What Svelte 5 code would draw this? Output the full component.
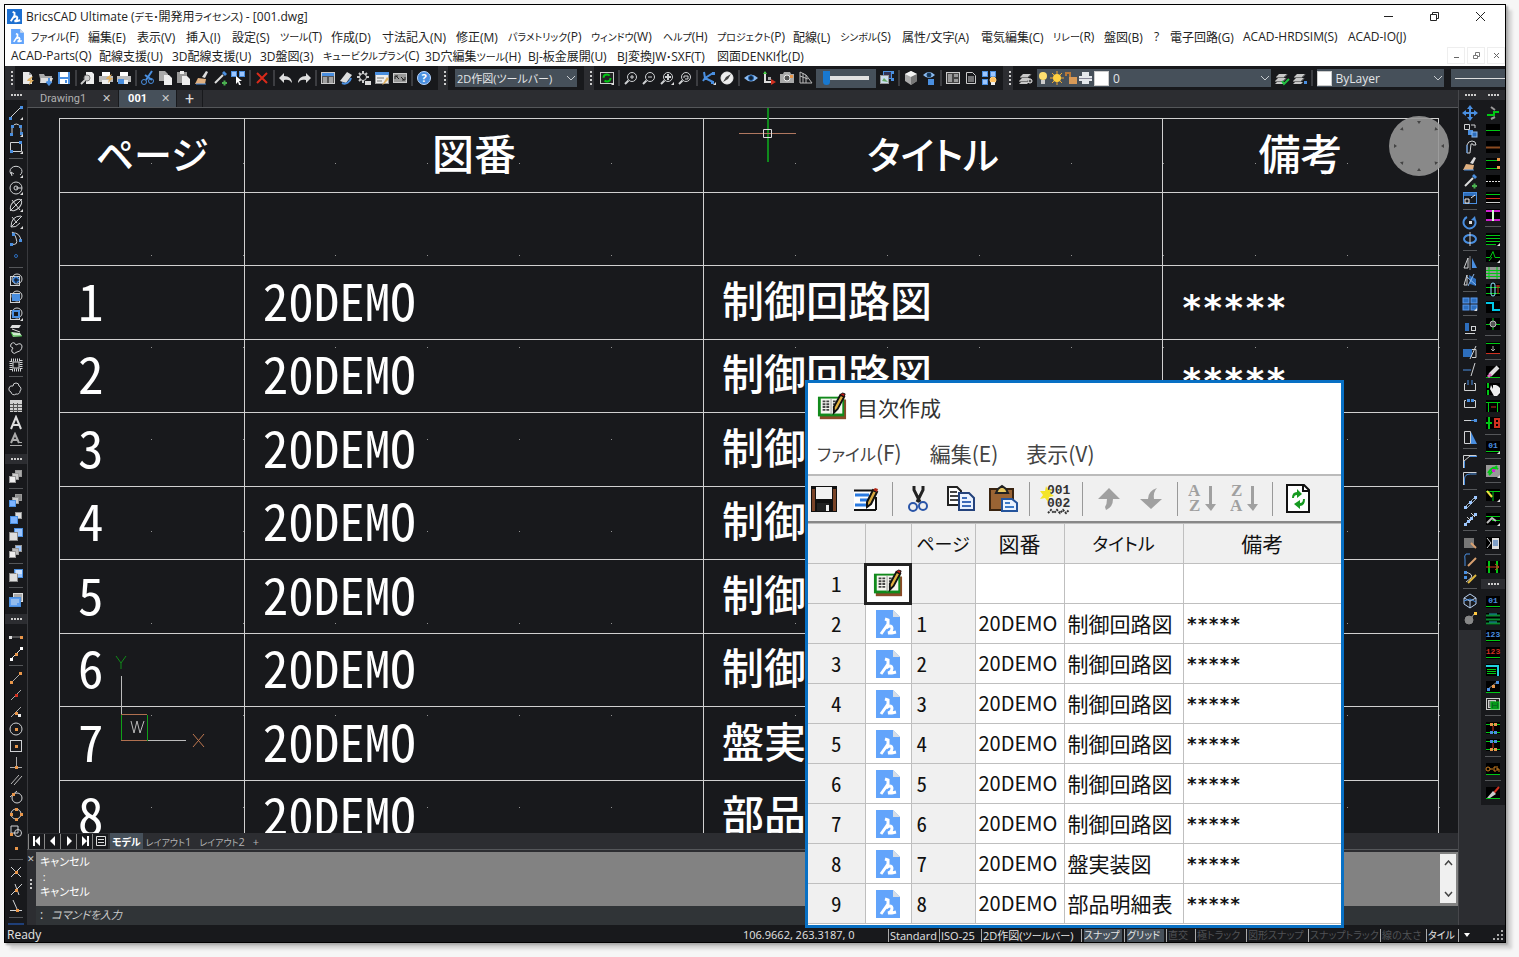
<script>
    const gray = '#d0d2d4';
    const blue = '#4a8fe0';
    const orange = '#e8964a';
    const green = '#00c814';
    const red = '#d03020';

    const line = (d, color = gray, width = 1) =>
        `<path d="${d}" fill="none" stroke="${color}" stroke-width="${width}"/>`;
    const fill = (d, color = gray) => `<path d="${d}" fill="${color}"/>`;
    const dot = (x, y, color = blue) => `<rect x="${x - 1}" y="${y - 1}" width="3" height="3" fill="${color}"/>`;
    const ring = (x, y, r, color = gray, inner = 'none') =>
        `<circle cx="${x}" cy="${y}" r="${r}" fill="${inner}" stroke="${color}"/>`;
    const box = (x, y, w, h, inner = 'none', color = 'none') =>
        `<rect x="${x}" y="${y}" width="${w}" height="${h}" fill="${inner}" stroke="${color}"/>`;
    const word = (text, color, y = 9) =>
        `<text x="8" y="${y}" fill="${color}" font-size="8" font-weight="bold" font-family="Liberation Mono" text-anchor="middle">${text}</text>`;
    const corner = fill('M12 15h3v-3z', '#ddd');
    const tile = box(1, 2, 14, 12, '#000');
    const page = fill('M3 2h6l3 3v9H3z', '#e8e8e8') + fill('M9 2v3h3z', '#999');
    const lens = ring(9, 7, 4.5) + line('M5.5 10.5L2 14', gray, 2);
    const stack = fill('M5 4h8l-3 3H2zM4 8h8l-3 3H1zM3 12h8l-2 2H1z', '#c8c8c8') + line('M2 7.5h8l3-3M1 11.5h8l3-3', '#777');
    const brush = fill('M12 1l2 1-3 6-3-1z', '#ddd') + fill('M4 8l8 1-1 5H1z', '#e0b080') + line('M2 14h10', blue);
    const dropper = fill('M10 3l2-2 3 3-2 2z', blue) + line('M11 5L3 13', '#ddd', 2) + line('M10 13h5M12.5 10.5v5', '#4ab050', 2);
    const printer = fill('M4 2h8v4H4z', '#fff') + fill('M1 6h14v6H1z', '#bbb') + fill('M4 10h8v4H4z', '#eee');
    const sheets = (a, b, c) => box(7.5, 1.5, 6, 6, a, '#999') + box(4.5, 4.5, 6, 6, b, '#999') + box(1.5, 7.5, 6, 6, c, '#999');
    const light = '#9cc6ff';
    const pair = box(6.5, 1.5, 8, 8, light, blue) + box(1.5, 5.5, 8, 8, '#ddd', '#888');
    const four = [[1, 2], [9, 2], [1, 9], [9, 9]].map(([x, y]) => box(x, y, 6, 5, '#2d6ebd', '#5a9af0')).join('');

    const icons = {
        New: page + fill('M8 9l5-3-2 4h3l-5 5 1-4H7z', '#e0b060'),
        Open: fill('M1 4h5l1 2h7v7H3z', '#aaa') + fill('M3 8h12l-2 5H2z', '#ddd') + line('M11 8v6M8.5 11.5l2.5 3 2.5-3', blue, 2),
        Save: fill('M2 2h12v12H2z', blue) + fill('M4 2h8v5H4zM4 9h8v5H4z', '#fff') + fill('M9 10h2v3H9z', blue),
        Preview: fill('M6 2h6l2 2v10H6z', '#eee') + ring(7, 8, 3, '#777', '#ccc') + line('M5 10l-4 4', '#ccc', 2),
        Publish: printer + fill('M9 7l5-3-2 4h3l-5 5 1-4H8z', '#e0b060'),
        PrintAs: printer + fill('M2 9h6v5H2z', blue),
        Cut: line('M12 1L6 10M5 5l7 5', blue, 2) + ring(4, 12, 2.5, blue) + ring(11, 11, 2.5, blue),
        Copy: fill('M1 1h6l3 3v7H1z', '#aaa') + fill('M6 5h5l3 3v7H6z', '#eee'),
        Paste: fill('M1 2h10v11H1z', '#999') + fill('M4 1h4v3H4z', '#eee') + fill('M6 6h5l3 3v6H6z', '#eee'),
        Match: brush,
        Picker: dropper,
        Select: box(1.5, 1.5, 5, 5, light, blue) + box(9.5, 1.5, 5, 5, light, blue) + fill('M6 6l6 5-3 0 2 4-2 0-1-3-2 2z', '#fff'),
        Delete: line('M3 3l10 10M13 3L3 13', '#d82a1a', 2),
        Undo: fill('M6 3v3c5 0 8 3 8 7-2-3-4-4-8-3v3L1 8z', '#ddd'),
        Redo: fill('M10 3v3c-5 0-8 3-8 7 2-3 4-4 8-3v3l5-5z', '#ddd'),
        Properties: box(1.5, 2.5, 13, 11, '#555', '#ccc') + fill('M2 3h12v3H2z', blue) + line('M3 8h4M3 10h4M3 12h4M9 8h4M9 10h4M9 12h4', '#eee'),
        Clean: fill('M9 2l5 3-6 8-6-2z', '#ddd') + line('M4 13c4 2 8-1 9-5', blue, 2),
        Settings: ring(7, 7, 3.5, '#ccc') + line('M7 1v3M7 10v3M1 7h3M10 7h3M3 3l2 2M11 3L9 5M3 11l2-2', '#ccc', 2) + fill('M9 11h6v4H9z', '#ddd'),
        Explorer: box(1.5, 2.5, 13, 11, '#eee', '#999') + fill('M1 2h14v3H1z', blue) + line('M3 8h7M3 11h5', '#777') + fill('M13 7l2 2-5 5-2 1z', '#e0b060'),
        Command: box(1.5, 3.5, 13, 9, '#999', '#ccc') + line('M3 9V6h3M4 6l3 3M13 7v3h-3M12 10L9 7', '#222'),
        Help: ring(8, 8, 6.5, '#bcd8ff', blue) + '<text x="8" y="12" fill="#fff" font-size="11" font-weight="bold" font-family="Open Sans" text-anchor="middle">?</text>',
        Regen: box(1.5, 2.5, 13, 11, '#222', '#ccc') + `<circle cx="8" cy="8" r="3.5" fill="none" stroke="${green}" stroke-width="2" stroke-dasharray="8 3"/>` + corner,
        ZoomIn: lens + line('M9 5v4M7 7h4'),
        ZoomOut: lens + line('M7 7h4'),
        ZoomAll: lens + line('M9 4v6M6 7h6', gray, 2) + corner,
        ZoomPrev: lens + line('M7 8V6h4v3H8'),
        Orbit: line('M3 2l1 6 8-5M4 8l8 4M4 8l-2 3', blue, 2) + dot(4, 8) + dot(12, 3) + dot(11, 12) + corner,
        Compass: ring(8, 8, 6, '#eee', '#eee') + fill('M12 4L9 9l-5 3 3-5z', '#444'),
        Look: fill('M1 8q7-7 14 0-7 7-14 0z', '#8abaf0') + ring(8, 8, 2.5, '#1d5fae', '#123'),
        Ucs: line('M4 2v10h9', '#ddd', 2) + fill('M2 4l2-3 2 3z', '#4c4') + fill('M10 9l5 3-5 3z', red) + box(7, 7, 3, 3, '#aaa'),
        Camera: fill('M1 4h3l1-2h6l1 2h3v9H1z', '#aaa') + ring(8, 8, 3, '#eee', '#555') + dot(12, 6, orange),
        Perspective: line('M3 2v11h12L9 5 3 2M3 6l8 3M6 3v10M9 5v8', '#bbb'),
        Render: box(4.5, 1.5, 8, 7, '#335', blue) + box(1.5, 5.5, 8, 8, '#cde', '#999') + fill('M3 11l2-3 4 4z', '#6a6') + dot(13, 2) + dot(13, 9),
        Solid: fill('M8 1l6 3v7l-6 4-6-4V4z', '#aaa') + fill('M8 1l6 3-6 3-6-3z', '#f4f4f4') + fill('M8 7l6-3v7l-6 4z', '#777'),
        Visual: fill('M2 5q6-6 12 0-6 6-12 0z', '#8abaf0') + ring(8, 5, 2, '#135', '#135') + box(7, 9, 6, 6, blue),
        Sheets: box(1.5, 2.5, 13, 11, '#444', '#ccc') + fill('M3 4h4v8H3zM9 4h4v3H9zM9 9h4v3H9z', '#999'),
        Report: line('M3.5 2.5h6l3 3v8h-9z', '#ccc') + line('M5 7h6M5 9h6M5 11h6', '#ccc'),
        Blocks: box(1.5, 1.5, 5, 5, light, blue) + box(9.5, 1.5, 5, 5, light, blue) + box(1.5, 9.5, 5, 5, light, blue) + ring(12, 10, 3, '#ffd080', '#ffc060') + fill('M10 12h4v3h-4z', '#eee'),
        Layers: stack + ring(12, 11, 2, '#eee', '#555'),
        LayerSet: stack + line('M8 11l2 3 5-5', '#20c040', 2),
        LayerPrev: stack + dot(13, 12),

        Line: line('M2 13L13 2') + dot(2, 13) + dot(13, 2) + corner,
        Polyline: line('M4 13V5q4-6 9 0v6') + dot(3, 12) + dot(4, 4) + dot(12, 4) + dot(13, 11) + corner,
        Rectangle: line('M2.5 3.5h11v9h-11z') + dot(12, 3) + dot(3, 12) + corner,
        Arc: line('M4 12a6 5 0 1 1 8 0M4 13l-1-4 3 2') + corner,
        Circle: ring(8, 8, 6) + line('M8 8h6') + ring(8, 8, 2) + corner,
        Ellipse: '<ellipse cx="8" cy="8" rx="7" ry="4" transform="rotate(-45 8 8)" fill="none" stroke="#d0d2d4"/>' + line('M2 14L14 2M4 3l8 10') + corner,
        EllipseArc: line('M13 2Q3 2 3 13 8 14 12 9M3 13L14 2M4 3l5 6') + corner,
        Spline: line('M3 13q8 2 5-6T4 2q8-1 9 8') + dot(3, 13) + dot(5, 3) + dot(12, 9),
        Point: ring(8, 8, 1.5, '#2d6ebd'),
        Hatch: box(2.5, 4.5, 9, 9, 'none', gray) + ring(9, 7, 5) + ring(8, 8, 3, blue, '#2765b5') + line('M6 8h5M8 6v5', '#111'),
        Gradient: box(2.5, 4.5, 9, 9, 'none', gray) + ring(9, 7, 5) + fill('M4 5h8v7H4z', blue),
        Boundary: box(2.5, 4.5, 9, 9, 'none', gray) + ring(9, 7, 5) + line('M5 5h6v6H5z', blue, 2) + corner,
        Region: fill('M4 2h9l-2 3H2z', '#ddd') + line('M4 6l8 3', '#ddd') + fill('M3 9l9 1 2 3-9 1z', '#cfeccf') + line('M3 9l2 4h9', '#3a3'),
        Wipeout: line('M5 8Q1 7 3 4 6 1 8 5q5-3 6 1 0 5-5 6-3 3-5 0-1-2 1-4z'),
        Frame: '<rect x="3" y="3" width="10" height="10" fill="none" stroke="#d0d2d4" stroke-width="3" stroke-dasharray="1 1"/>' + line('M5 5h6v6H5z'),
        Cloud: line('M5 5a3 3 0 0 1 6 0 3 3 0 0 1 1 5 3 3 0 0 1-4 3 3 3 0 0 1-5-2 3 3 0 0 1 2-6z'),
        Table: box(2, 2, 12, 12, '#d0d0d0') + line('M2 6.5h12M2 9.5h12M2 12.5h12M5.5 5v9M9.5 5v9', '#555'),
        Text: line('M3 14L8 2l5 12M5 10h6', '#ddd', 2),
        Mtext: line('M3 11L7 2l4 9M4 8h6', '#aaa', 2) + line('M2 13.5h12M11 10.5h3', '#aaa'),

        DrawOrder: sheets('#aaa', '#ccc', '#eee'),
        Front: sheets('#888', '#ccc', light) + box(1.5, 7.5, 6, 6, '#7db4ff', blue),
        Above: box(7.5, 2.5, 6, 6, '#ddd', '#999') + box(2.5, 6.5, 7, 7, '#7db4ff', blue),
        Back: pair,
        Under: sheets(light, '#bbb', '#eee'),
        TextFront: pair + line('M8 3h6M8 5h6', '#fff'),
        Annotation: box(5.5, 1.5, 9, 8, '#aaa', '#ddd') + box(1.5, 5.5, 11, 9, '#5c9df0', blue) + line('M3 8h8M3 10h8M3 12h6', '#cde'),

        Temp: line('M3 8h10', '#888') + dot(2, 8, '#ddd') + dot(13, 8, orange),
        From: line('M2 14L14 2', '#ddd') + dot(3, 13, '#fff') + dot(13, 2, '#fff') + dot(8, 8, orange),
        Endpoint: line('M3 13L13 3', '#aaa') + dot(3, 12, orange) + dot(12, 3, orange),
        Midpoint: line('M3 13L13 3', '#aaa') + dot(8, 8, red),
        Nearest: line('M3 13L13 3', '#aaa') + dot(8, 9, orange) + dot(11, 11, '#eee'),
        Center: ring(8, 8, 6) + dot(8, 8, orange),
        GeoCenter: box(2.5, 2.5, 11, 11, 'none', gray) + dot(8, 8, orange),
        Perpendicular: line('M8.5 2v10M2 12.5h12', '#aaa') + dot(8, 12, orange),
        Parallel: line('M3 12l8-9M6 13l8-9', '#bbb'),
        Tangent: ring(9, 9, 5) + line('M2 8l7-6') + dot(5, 5, orange),
        Quadrant: ring(8, 8, 5) + dot(8, 3, orange) + dot(8, 13, orange) + dot(3, 8, orange) + dot(13, 8, orange),
        Insertion: line('M3 3h7v7H3z') + ring(10, 10, 3.5) + dot(3, 11, orange),
        Node: dot(8, 8, orange),
        Intersection: line('M3 3l10 10M13 3L3 13') + dot(8, 8, orange),
        Apparent: line('M3 14L14 3M7 3l4 11') + dot(8, 9, orange),
        Extension: line('M2 12.5h12M5 2l4 9') + dot(9, 12, orange),
        Snap: box(0, 1, 16, 15, '#1f3f78') + line('M2 5.5h12', blue),

        Move: line('M8 2v12M2 8h12', blue, 2) + fill('M8 0l3 4H5zM8 16l3-4H5zM0 8l4-3v6zM16 8l-4-3v6z', blue),
        CopyObj: line('M2.5 2.5h5v5h-5zM9 3h4v3') + box(6, 8, 5, 5, blue) + box(10, 10, 5, 5, '#2d6ebd', '#8abaf0'),
        Offset: line('M5 14V6q1-4 5-4t4 4H11q0-2-2-1L8 14z') + line('M5 14V6', blue),
        Brush: brush,
        Dropper: dropper,
        Stretch: box(1.5, 2.5, 13, 11, 'none', blue) + box(2, 3, 12, 3, '#2d6ebd') + line('M3 9h4v4H3zM9 8l4-3', '#eee'),
        Rotate: line('M5 3a6 6 0 1 0 8 3', blue, 2) + dot(8, 8, '#ddd') + fill('M13 2l1 5-5-1z', blue),
        Rotate3d: '<ellipse cx="8" cy="8" rx="6" ry="4" fill="none" stroke="#4a8fe0" stroke-width="2"/>' + line('M8 1v14'),
        Mirror: line('M6 3v10H2z') + line('M8 1v14', '#888') + fill('M10 3v10h5z', blue),
        Mirror3d: line('M5 3v10H2z') + fill('M7 3l7 4v7l-6-2z', '#2d6ebd') + line('M5 5l9 8M12 2l-6 12', '#8abaf0'),
        Array: four + corner,
        Align: box(3, 3, 4, 8, '#2d6ebd') + box(9.5, 6.5, 4, 4, 'none', gray) + line('M3 13.5h10'),
        Trim: box(1, 5, 9, 8, '#2d6ebd') + line('M10 5.5h4v8h-4M14 2L8 15'),
        Extend: line('M1 9h8', blue) + line('M13 2L9 15'),
        Break: line('M4 5.5H2.5v7h11v-7H12') + line('M6 2v5M10 2v5', blue),
        Join: line('M4 5.5H2.5v7h11v-7H12') + dot(6, 5) + dot(10, 5),
        Lengthen: line('M2 8.5h7') + line('M9 8.5h4', blue) + dot(13, 8),
        Scale: line('M2.5 2.5h6v12h-6z') + fill('M9 3l6 12H9z', blue),
        Chamfer: line('M1.5 15V2.5h13M2 8l6-5') + line('M2.5 8v7M8 3.5h7', blue),
        Fillet: line('M1.5 15V2.5h13') + line('M2.5 15V9q0-5 6-5h6', blue),
        Divide: line('M3 13L13 3M5 14l9-9', '#9ab') + dot(3, 13, light) + dot(13, 3, light) + dot(8, 8, light),
        Measure: line('M3 13L13 3', '#9ab') + dot(3, 13, light) + dot(6, 10, light) + dot(9, 7, light) + dot(13, 3, light) + line('M5 6l4 4M9 2l4 4'),
        EditHatch: box(2, 3, 10, 10, '#777') + line('M9 8l5 5', '#d8a070', 2),
        EditPline: line('M8 2H4Q2 3 3 8v6', blue) + line('M6 14l8-8', '#d8a070', 2),
        EditSpline: line('M3 3q9 2 6 6l-5 4') + dot(3, 3) + dot(3, 8) + line('M6 14l8-8', '#e0b840', 2),
        Cube: line('M8 1l6 4v6l-6 4-6-4V5zM8 8l6-3M8 8L2 5M8 8v7', '#b8d0f0') + line('M2 8l6-2 6 3', blue),
        Explode: ring(7, 10, 4, '#888', '#888') + line('M10 7l2-3', '#999') + dot(13, 3, '#ffc840'),

        Wire: line('M2 10h7V7h5', green, 2) + line('M6 2l4 3M6 14l4-2', '#999', 2),
        WireGreen: tile + line('M1 8.5h14', green),
        WireBrown: tile + line('M1 8.5h14', '#8a4a20', 2),
        WirePair: tile + line('M1 4.5h12M1 12.5h12', green) + dot(13, 3, orange) + dot(13, 11, orange),
        WireDash: tile + '<path d="M1 8.5h14" stroke="#ddd" stroke-dasharray="2 1"/>',
        WireThree: tile + line('M1 4.5h14', green) + line('M1 8.5h14', red) + line('M1 12.5h14', '#ccc'),
        WireLink: tile + line('M1 4h14M1 13h14', '#d020d0', 2) + line('M8 3v11', '#ccffcc', 2),
        Bus: tile + line('M1 4.5h14M1 7.5h14M1 10.5h14M1 13.5h10', green) + corner,
        Jump: tile + line('M1 9.5h4l3-6 2 6h5M7 9l-3 4', green) + corner,
        Grid: box(1, 2, 14, 12, '#999') + line('M1 5.5h14M1 8.5h14M1 11.5h14M4 2v12M12 2v12', green),
        Cable: tile + line('M1 5.5h14M1 11.5h14', green) + '<rect x="6" y="1" width="4" height="13" rx="2" fill="none" stroke="#8fe8ff"/>' + line('M13 12V3M11 4h4', red),
        Step: tile + line('M1 4h7v7h7', '#00c8e8', 2),
        Junction: tile + line('M1 8.5h14M8 2v12', green) + ring(8, 8, 3, '#bbb', '#555'),
        Between: tile + line('M1 3.5h14', green) + line('M1 13.5h14', red) + line('M8 6v5M6 9l2 2 2-2', '#aaa'),
        Erase: tile + line('M1 13.5h14', green) + line('M13 3L5 11', '#ddd', 4) + line('M6 10l-3 3', '#e070c0', 3),
        Grab: tile + line('M3 2v5M3 9v5', green, 2) + fill('M6 4l2 4 0-4 2 0 1 0 2 1 2 2v5l-3 3H9L5 8z', '#eee'),
        Gate: tile + line('M3.5 14V4.5h9V14M1 4.5h14', green) + line('M6 9h5', red),
        Contact: tile + line('M4 2v12M1 8h6', green, 2) + line('M10 4h4v8h-4zM9 8h5', red, 2),
        Number: tile + word('01', blue) + line('M1 12.5h14', green) + corner,
        Symbol: box(1, 2, 14, 12, '#999') + line('M3 10q5-8 10-4M4 12l8-9', green, 2) + dot(8, 7, '#d020d0') + corner,
        Mark: tile + line('M1 4.5h14M8 4v10', green) + line('M2 4l5 6', '#f0e040', 2) + corner,
        Route: tile + line('M1 5.5h14M7 9.5h8', green) + line('M2 12l5-5 4 3', '#bbb', 2) + corner,
        Listing: tile + line('M2 3l4 5-4 5') + box(7, 3, 7, 11, '#ddd') + line('M8 6h5M8 8h5M8 10h5', '#2060b0'),
        Insert: tile + line('M4 2v12M12 2v12', green, 2) + line('M1 8h12M10 5l4 3-4 3', red),

        NumberBlue: tile + word('01', blue) + line('M1 12.5h14', green),
        Rows: tile + line('M1 4.5h14M1 8.5h14M1 12.5h14', '#0a8a30', 2) + line('M4 3h8M4 11h8', '#20b0b8'),
        CountBlue: tile + word('123', blue) + line('M1 12.5h14', green),
        CountRed: tile + word('123', red) + line('M1 12.5h14', green),
        Frames: tile + line('M1 4h12v10', '#20d0e0', 2) + line('M2 7.5h9M2 9.5h9M2 11.5h9', green),
        Jumpers: tile + line('M1 13.5h14', green) + line('M3 10l9-7', '#888') + dot(3, 10) + dot(8, 7, orange) + dot(12, 3),
        Panels: box(1.5, 2.5, 13, 11, '#222', '#ccc') + box(3.5, 4.5, 7, 7, '#777', '#ccc') + box(6, 6, 8, 7, '#0a6a20', green) + line('M8 8h4M8 11h4', green),
        SwapUp: tile + line('M1 4.5h14M1 12.5h14', green) + dot(6, 4, orange) + dot(10, 4, orange) + line('M8 6v5', red) + dot(6, 12) + dot(10, 12),
        SwapDown: tile + line('M1 4.5h14M1 12.5h14', green) + dot(6, 4) + dot(10, 4) + line('M8 6v5', red) + dot(6, 12, orange) + dot(10, 12, orange),
        Channel: tile + ring(3, 8, 2, '#d08020') + line('M5 8h3M11 6H9v4h2M12 5v5M12 8h2v3', '#d08020') + line('M1 13.5h14', green),
        Sweep: tile + line('M1 13.5h14', green) + line('M14 2L8 9', red, 2) + fill('M8 6l3 3-6 4H2z', '#ccc'),
    };

    const fileBar = [
        ['New', 'Open', 'Save'],
        ['Preview', 'Publish', 'PrintAs'],
        ['Cut', 'Copy', 'Paste', 'Match', 'Picker', 'Select'],
        ['Delete'],
        ['Undo', 'Redo'],
        ['Properties', 'Clean', 'Settings', 'Explorer', 'Command'],
        ['Help'],
    ];
    const zoomBar = [
        ['Regen'],
        ['ZoomIn', 'ZoomOut', 'ZoomAll', 'ZoomPrev'],
        ['Orbit', 'Compass'],
        ['Look', 'Ucs', 'Camera', 'Perspective'],
    ];
    const viewBar = [['Render'], ['Solid', 'Visual'], ['Sheets', 'Report', 'Blocks']];

    const leftBars = [
        [
            ['Line', 'Polyline', 'Rectangle'],
            ['Arc', 'Circle', 'Ellipse', 'EllipseArc', 'Spline', 'Point'],
            ['Hatch', 'Gradient', 'Boundary', 'Region', 'Wipeout', 'Frame'],
            ['Cloud', 'Table', 'Text', 'Mtext'],
        ],
        [['DrawOrder'], ['Front', 'Above', 'Back', 'Under'], ['TextFront'], ['Annotation']],
        [
            ['Temp', 'From'],
            ['Endpoint', 'Midpoint', 'Nearest', 'Center', 'GeoCenter', 'Perpendicular', 'Parallel', 'Tangent', 'Quadrant', 'Insertion', 'Node'],
            ['Intersection', 'Apparent', 'Extension'],
            ['Snap'],
        ],
    ];
    const modifyBars = [
        [
            ['Move', 'CopyObj', 'Offset', 'Brush', 'Dropper', 'Stretch'],
            ['Rotate', 'Rotate3d'],
            ['Mirror', 'Mirror3d'],
            ['Array'],
            ['Align'],
            ['Trim', 'Extend', 'Break', 'Join', 'Lengthen', 'Scale'],
            ['Chamfer', 'Fillet'],
            ['Divide', 'Measure'],
            ['EditHatch', 'EditPline', 'EditSpline'],
            ['Cube', 'Explode'],
        ],
    ];
    const wireBars = [
        [
            ['Wire', 'WireGreen', 'WireBrown', 'WirePair', 'WireDash', 'WireThree', 'WireLink'],
            ['Bus', 'Jump', 'Grid', 'Cable', 'Step', 'Junction'],
            ['Between'],
            ['Erase', 'Grab', 'Gate', 'Contact'],
            ['Number'],
            ['Symbol'],
            ['Mark'],
            ['Route'],
            ['Listing'],
            ['Insert'],
        ],
        [
            ['NumberBlue', 'Rows', 'CountBlue', 'CountRed', 'Frames', 'Jumpers', 'Panels'],
            ['SwapUp', 'SwapDown'],
            ['Channel'],
            ['Sweep'],
        ],
    ];

    const menuTop = [
        ['ファイル(F)', 57], ['編集(E)', 49], ['表示(V)', 49], ['挿入(I)', 46], ['設定(S)', 48],
        ['ツール(T)', 51], ['作成(D)', 51], ['寸法記入(N)', 74], ['修正(M)', 52], ['パラメトリック(P)', 83],
        ['ウィンドウ(W)', 72], ['ヘルプ(H)', 54], ['プロジェクト(P)', 76], ['配線(L)', 47], ['シンボル(S)', 62],
        ['属性/文字(A)', 79], ['電気編集(C)', 72], ['リレー(R)', 51], ['盤図(B)', 50], ['?', 16],
        ['電子回路(G)', 73], ['ACAD-HRDSIM(S)', 105], ['ACAD-IO(J)', 60],
    ];
    const menuBottom = [
        ['ACAD-Parts(Q)', 88], ['配線支援(U)', 73], ['3D配線支援(U)', 88], ['3D盤図(3)', 63], ['キュービクルプラン(C)', 102],
        ['3D穴編集ツール(H)', 103], ['BJ-板金展開(U)', 89], ['BJ変換JW・SXF(T)', 100], ['図面DENKI化(D)', 90],
    ];

    const titles = ['制御回路図', '制御回路図', '制御回路図', '制御回路図', '制御回路図', '制御回路図', '盤実装図', '部品明細表'];
    const headings = ['ページ', '図番', 'タイトル', '備考'];

    const status = [
        ['Standard', 51, ''], ['ISO-25', 42, ''], ['2D作図(ツールバー)', 100, ''],
        ['スナップ', 43, 'on small'], ['グリッド', 42, 'on small'],
        ['直交', 29, 'off small'], ['極トラック', 51, 'off small'], ['図形スナップ', 62, 'off small'],
        ['スナップトラック', 72, 'off small'], ['線の太さ', 46, 'off small'], ['タイル', 32, 'small'],
    ];

    // katakana runs are set a little smaller than kanji and latin
    function runs(text) {
        return text.match(/[ァ-ヺー・]+|[^ァ-ヺー・]+/g).map((t) => ({ t, kana: /[ァ-ヺ・]/.test(t) }));
    }
</script>

{#snippet jp(text)}{#each runs(text) as r}<span class:kana={r.kana}>{r.t}</span>{/each}{/snippet}

{#snippet tool(name)}
    <button type="button" class="tool" aria-label={name}>
        <svg width="16" height="16" viewBox="0 0 16 16">{@html icons[name]}</svg>
    </button>
{/snippet}

{#snippet groups(list)}
    {#each list as group, i}
        {#if i > 0}<i class="sep"></i>{/if}
        {#each group as name}{@render tool(name)}{/each}
    {/each}
{/snippet}

{#snippet sidebar(bars)}
    {#each bars as bar}
        <div class="sideBar">
            <div class="grip">{#each [1, 2, 3, 4] as n}<i></i>{/each}</div>
            {@render groups(bar)}
        </div>
    {/each}
{/snippet}

{#snippet chevron()}
    <svg class="chevron" width="10" height="6" viewBox="0 0 10 6"><path d="M1 1l4 4 4-4" fill="none" stroke="#c8ccd0" /></svg>
{/snippet}

{#snippet handle()}
    <div class="handle"><i></i></div>
{/snippet}

{#snippet fileIcon(w, h)}
    <svg width={w} height={h} viewBox="0 0 24 28">
        <path d="M0 0h17l7 7v21H0z" fill="#62a4fb" />
        <path d="M17 0v7h7z" fill="#d6dde6" />
        <path d="M9 9l3 1v4L5 24" fill="none" stroke="#fff" stroke-width="3" />
        <path d="M10 18q5-4 6 0 0 4-4 5h4l4-1" fill="none" stroke="#fff" stroke-width="3" />
    </svg>
{/snippet}

{#snippet bookIcon()}
    <svg width="30" height="30" viewBox="0 0 32 32">
        <path d="M3 8h28v21H3z" fill="#8a4a28" />
        <path d="M1 5h28v21H1z" fill="#128a1c" />
        <path d="M4 7h23v16H4z" fill="#f6f6f0" />
        <path d="M15 7v17" stroke="#999" stroke-width="1" />
        <path d="M6 10h7M6 13h7M6 16h7M6 19h7M17 10h5M17 13h4M17 16h3M17 19h3" stroke="#444" stroke-width="2" stroke-dasharray="3 1" />
        <path d="M25 3l4 2-7 13-4 4v-6z" fill="#e0b040" stroke="#111" stroke-width="2" />
        <path d="M25 3l4 2 1-3-3-1z" fill="#c01810" stroke="#111" />
    </svg>
{/snippet}

<div class="desktop">
    <div class="window">
        <header>
            <div class="titlebar">
                <svg width="15" height="15" viewBox="0 0 16 16">
                    <path d="M0 0h16v16H0z" fill="#1c6fd0" />
                    <path d="M6 3l2 1v3l-4 6M7 9q3-2 4 0 0 3-3 4h2l4-1" fill="none" stroke="#fff" stroke-width="2" />
                </svg>
                <h1>{@render jp('BricsCAD Ultimate (デモ・開発用ライセンス) - [001.dwg]')}</h1>
                <div class="caption">
                    <button type="button" aria-label="Minimize"><svg width="11" height="11" viewBox="0 0 11 11"><path d="M1 5.5h9" stroke="#222" /></svg></button>
                    <button type="button" aria-label="Restore"><svg width="11" height="11" viewBox="0 0 11 11"><path d="M1.5 3.5h6v6h-6zM3.5 3V1.5h6v6H8" fill="none" stroke="#222" /></svg></button>
                    <button type="button" aria-label="Close"><svg width="11" height="11" viewBox="0 0 11 11"><path d="M1 1l9 9M10 1l-9 9" stroke="#222" /></svg></button>
                </div>
            </div>
            <nav class="menu first">
                {@render fileIcon(13, 15)}
                {#each menuTop as [label, width]}
                    <button type="button" style="width: {width}px">{@render jp(label)}</button>
                {/each}
            </nav>
            <nav class="menu">
                {#each menuBottom as [label, width]}
                    <button type="button" style="width: {width}px">{@render jp(label)}</button>
                {/each}
                <div class="mdi">
                    <button type="button" aria-label="Minimize drawing"><svg width="7" height="7" viewBox="0 0 7 7"><path d="M1 5.5h5" stroke="#666" /></svg></button>
                    <button type="button" aria-label="Restore drawing"><svg width="7" height="7" viewBox="0 0 7 7"><path d="M.5 3.5h4v3h-4zM2.5 3V.5h4v4H5" fill="none" stroke="#777" /></svg></button>
                    <button type="button" aria-label="Close drawing"><svg width="7" height="7" viewBox="0 0 7 7"><path d="M1 1l5 5M6 1L1 6" stroke="#666" /></svg></button>
                </div>
            </nav>
        </header>

        <div class="toolbars">
            {@render handle()}
            <div class="bar">{@render groups(fileBar)}</div>
            {@render handle()}
            <div class="bar">
                <label class="combo workspace">
                    <select aria-label="Workspace"><option>2D作図(ツールバー)</option></select>
                    {@render chevron()}
                </label>
            </div>
            {@render handle()}
            <div class="bar">
                {@render groups(zoomBar)}
                <input class="lensSlider" type="range" min="0" max="100" value="0" aria-label="Lens length" />
                {@render groups(viewBar)}
            </div>
            {@render handle()}
            <div class="bar layers">
                {@render tool('Layers')}
                <label class="combo layer">
                    <svg width="56" height="16" viewBox="0 0 56 16">
                        <circle cx="6" cy="6" r="4" fill="#ffe070" /><path d="M4 10h4v4H4z" fill="#ccc" />
                        <path d="M20 1v14M13 8h14M15 3l10 10M25 3L15 13" stroke="#f0a830" /><circle cx="20" cy="8" r="4" fill="#ffd040" />
                        <path d="M29 6V3h4v5" fill="none" stroke="#b87838" stroke-width="2" /><path d="M32 7h8v7h-8z" fill="#d89a58" />
                        <path d="M45 2h7v4h-7zM42 6h13v5H42zM45 10h7v4h-7z" fill="#e4e8ec" /><path d="M42 8.5h13" stroke="#889" />
                    </svg>
                    <i class="swatch"></i>
                    <select aria-label="Layer"><option>0</option></select>
                    {@render chevron()}
                </label>
                {@render tool('LayerSet')}
                {@render tool('LayerPrev')}
                <i class="sep"></i>
                <label class="combo color">
                    <i class="swatch"></i>
                    <select aria-label="Color"><option>ByLayer</option></select>
                    {@render chevron()}
                </label>
                <div class="linetype"><i></i></div>
            </div>
        </div>

        <main>
            <aside class="draw">{@render sidebar(leftBars)}</aside>

            <div class="work">
                <div class="tabs">
                    <button type="button" class="tab">Drawing1 <span>✕</span></button>
                    <button type="button" class="tab active">001 <span>✕</span></button>
                    <button type="button" class="tab add">+</button>
                </div>

                <div class="canvas">
                    <table class="cad">
                        <colgroup><col /><col class="wide" /><col class="wide" /><col class="note" /></colgroup>
                        <tbody>
                            <tr>{#each headings as h}<th>{@render jp(h)}</th>{/each}</tr>
                            <tr><td></td><td></td><td></td><td></td></tr>
                            {#each titles as title, i}
                                <tr>
                                    <td class="half">{i + 1}</td>
                                    <td class="half">20DEMO</td>
                                    <td>{title}</td>
                                    <td class="stars">*****</td>
                                </tr>
                            {/each}
                        </tbody>
                    </table>

                    <svg class="cursor" width="58" height="54" viewBox="0 0 58 54">
                        <path d="M28 0h2v54h-2z" fill="#0f8a1c" />
                        <path d="M0 25.5h57" stroke="#b07860" />
                        <path d="M24.5 21.5h8v8h-8z" fill="none" stroke="#ddd" />
                    </svg>
                    <svg class="compass" width="60" height="60" viewBox="0 0 60 60">
                        <circle cx="30" cy="30" r="30" fill="#969696" fill-opacity=".9" />
                        {#each [0, 45, 90, 135, 180, 225, 270, 315] as a}
                            <path d="M28 5h4l-2 3z" fill="#444" transform="rotate({a} 30 30)" />
                        {/each}
                    </svg>
                    <svg class="ucs" width="94" height="94" viewBox="0 0 94 94">
                        <path d="M7.5 22v64M7 86.5h65" stroke="#bbb" />
                        <path d="M2 2l5 7 5-7M7 9v6" fill="none" stroke="#108a18" />
                        <path d="M79 80l11 13M90 80L79 93" stroke="#c07850" />
                        <path d="M7 60.5h26M7 86.5h26" stroke="#b07050" />
                        <path d="M7.5 61v25M33.5 61v26" stroke="#10a018" />
                        <path d="M17 67l3 12 3-12 3 12 4-12" fill="none" stroke="#bbb" />
                    </svg>
                </div>

                <div class="layouts">
                    <button type="button" class="nav" aria-label="First layout"><svg width="10" height="10" viewBox="0 0 10 10"><path d="M1 0h2v10H1zM8 0v10L3 5z" fill="#fff" /></svg></button>
                    <button type="button" class="nav" aria-label="Previous layout"><svg width="10" height="10" viewBox="0 0 10 10"><path d="M7 0v10L2 5z" fill="#fff" /></svg></button>
                    <button type="button" class="nav" aria-label="Next layout"><svg width="10" height="10" viewBox="0 0 10 10"><path d="M3 0v10l5-5z" fill="#fff" /></svg></button>
                    <button type="button" class="nav" aria-label="Last layout"><svg width="10" height="10" viewBox="0 0 10 10"><path d="M2 0v10l5-5zM7 0h2v10H7z" fill="#fff" /></svg></button>
                    <button type="button" class="nav" aria-label="Layout list"><svg width="10" height="10" viewBox="0 0 10 10"><path d="M.5.5h9v9h-9zM2 3.5h6M2 6.5h6" fill="none" stroke="#ddd" /></svg></button>
                    <button type="button" class="layout active">モデル</button>
                    <button type="button" class="layout">レイアウト<span>1</span></button>
                    <button type="button" class="layout">レイアウト<span>2</span></button>
                    <button type="button" class="layout"><span>+</span></button>
                </div>

                <div class="command">
                    <div class="commandHandle"><button type="button" aria-label="Close command line">✕</button><i></i></div>
                    <div class="console">
                        <div class="history">
                            <div class="log">
                                <p>キャンセル</p>
                                <p>&nbsp;:</p>
                                <p>キャンセル</p>
                            </div>
                            <div class="scroll">
                                <button type="button" aria-label="Scroll up"><svg width="9" height="6" viewBox="0 0 9 6"><path d="M1 5l3.5-4L8 5" fill="none" stroke="#444" stroke-width="1.5" /></svg></button>
                                <button type="button" aria-label="Scroll down"><svg width="9" height="6" viewBox="0 0 9 6"><path d="M1 1l3.5 4L8 1" fill="none" stroke="#444" stroke-width="1.5" /></svg></button>
                            </div>
                        </div>
                        <label class="prompt">:<input type="text" placeholder="コマンドを入力" /></label>
                    </div>
                </div>
            </div>

            <aside class="modify">{@render sidebar(modifyBars)}</aside>
            <aside class="wires">{@render sidebar(wireBars)}</aside>
        </main>

        <footer>
            <span class="ready">Ready</span>
            <span class="coords">106.9662, 263.3187, 0</span>
            {#each status as [label, width, kind]}
                <button type="button" class="field {kind}" style="width: {width}px"><b>{@render jp(label)}</b></button>
            {/each}
            <button type="button" class="field more" aria-label="Status bar options"><svg width="8" height="5" viewBox="0 0 8 5"><path d="M1 0h6L4 4z" fill="#fff" /></svg></button>
            <svg class="size" width="10" height="10" viewBox="0 0 10 10"><path d="M8 0h2v2H8zM8 4h2v2H8zM8 8h2v2H8zM4 4h2v2H4zM4 8h2v2H4zM0 8h2v2H0z" fill="#aaa" /></svg>
        </footer>

        <section class="dialog">
            <div class="dialogTitle">
                {@render bookIcon()}
                <h2>目次作成</h2>
            </div>
            <nav class="dialogMenu">
                <button type="button">{@render jp('ファイル(F)')}</button>
                <button type="button">編集(E)</button>
                <button type="button">表示(V)</button>
            </nav>
            <div class="dialogTools">
                <button type="button" aria-label="Save list">
                    <svg width="32" height="32" viewBox="0 0 32 32"><path d="M3 3h26v26H3z" fill="#111" /><path d="M4 6h3v22H4zM25 6h3v22h-3z" fill="#7a4428" /><path d="M8 4h16v12H8z" fill="#f2f2f2" /><path d="M9 20h12v8H9z" fill="#222" /><path d="M18 22h3v6h-3z" fill="#eee" /></svg>
                </button>
                <button type="button" aria-label="Edit row">
                    <svg width="32" height="32" viewBox="0 0 32 32"><path d="M4 7h22v20H4z" fill="#fff" /><path d="M4 7.5h20M4 27h22M26 14v13" fill="none" stroke="#111" stroke-width="2" /><path d="M5 12h14M10 17h9M5 22h14" stroke="#2a7ae0" stroke-width="3" /><path d="M23 7l4 2-6 12-4 3v-5z" fill="#d8a840" stroke="#111" stroke-width="2" /><path d="M23 7l4 2 1-3-3-1z" fill="#b02818" /></svg>
                </button>
                <i></i>
                <button type="button" aria-label="Cut row">
                    <svg width="32" height="32" viewBox="0 0 32 32" fill="none"><path d="M11 3v4l6 12M20 3v4l-6 12" stroke="#222" stroke-width="3" /><circle cx="10" cy="24" r="4" stroke="#2a55a8" stroke-width="2" /><circle cx="20" cy="23" r="4" stroke="#2a55a8" stroke-width="2" /></svg>
                </button>
                <button type="button" aria-label="Copy row">
                    <svg width="32" height="32" viewBox="0 0 32 32"><path d="M3 4h9l4 4v14H3z" fill="#fff" stroke="#222" stroke-width="2" /><path d="M5 9h7M5 13h9M5 17h9" stroke="#444" stroke-width="2" /><path d="M14 10h10l5 5v12H14z" fill="#eaf2ff" stroke="#24427c" stroke-width="2" /><path d="M17 15h5M17 19h9M17 23h9" stroke="#3c6ab8" stroke-width="2" /></svg>
                </button>
                <button type="button" aria-label="Paste row">
                    <svg width="32" height="32" viewBox="0 0 32 32"><path d="M3 6h23v21H3z" fill="#9a6434" stroke="#3a2410" stroke-width="2" /><path d="M9 10l2-4 4-3 4 3 2 4z" fill="#e8c860" stroke="#222" stroke-width="2" /><path d="M15 16h10l5 4v8H15z" fill="#eaf2ff" stroke="#24549c" stroke-width="2" /><path d="M18 20h5M18 24h9" stroke="#3c7ac8" stroke-width="2" /></svg>
                </button>
                <i></i>
                <button type="button" aria-label="Renumber">
                    <svg width="32" height="32" viewBox="0 0 32 32" font-family="Liberation Mono" font-weight="bold" font-size="13" fill="#333"><text x="7" y="11">001</text><text x="7" y="24">002</text><path d="M8 30l3-3 3 3 3-3 3 3 3-3 3 3 3-3" fill="none" stroke="#333" stroke-width="2" stroke-dasharray="2 1" /><path d="M6 3l2 4 4-1-2 4 4 3-5 1-1 5-3-4-5 1 3-4-3-4 5 0z" fill="#f4e428" /></svg>
                </button>
                <i></i>
                <button type="button" aria-label="Move up">
                    <svg width="32" height="32" viewBox="0 0 32 32"><path d="M16 5l11 11h-7q0 8-7 11l-1-3q2-3 2-8H5z" fill="#a0a0a0" /></svg>
                </button>
                <button type="button" aria-label="Move down">
                    <svg width="32" height="32" viewBox="0 0 32 32"><path d="M22 5q-4 4-3 11h8L16 26 5 16h8q0-8 9-11z" fill="#a0a0a0" /></svg>
                </button>
                <i></i>
                <button type="button" aria-label="Sort ascending">
                    <svg width="32" height="32" viewBox="0 0 32 32" font-family="Liberation Serif" font-weight="bold" font-size="17" fill="#a0a0a0"><text x="0" y="13">A</text><text x="1" y="28">Z</text><path d="M21 3h3v18h4l-5 7-6-7h4z" /></svg>
                </button>
                <button type="button" aria-label="Sort descending">
                    <svg width="32" height="32" viewBox="0 0 32 32" font-family="Liberation Serif" font-weight="bold" font-size="17" fill="#a0a0a0"><text x="1" y="13">Z</text><text x="0" y="28">A</text><path d="M21 3h3v18h4l-5 7-6-7h4z" /></svg>
                </button>
                <i></i>
                <button type="button" aria-label="Refresh">
                    <svg width="32" height="32" viewBox="0 0 32 32"><path d="M4 2h17l5 5v22H4z" fill="#fff" stroke="#111" stroke-width="2" /><path d="M20 2v6h6" fill="none" stroke="#111" stroke-width="2" /><path d="M9 15q0-6 5-6V6l5 5-5 4v-3q-3 0-3 3zM22 16q0 7-5 7v3l-6-5 6-4v3q3 0 3-4z" fill="#169a20" /></svg>
                </button>
            </div>
            <table class="index">
                <colgroup><col class="i1" /><col class="i2" /><col class="i3" /><col class="i4" /><col class="i5" /><col /></colgroup>
                <thead>
                    <tr><th></th><th></th>{#each headings as h}<th>{@render jp(h)}</th>{/each}</tr>
                </thead>
                <tbody>
                    <tr><th>1</th><td class="icon selected">{@render bookIcon()}</td><td class="page"></td><td></td><td></td><td></td></tr>
                    {#each titles as title, i}
                        <tr>
                            <th>{i + 2}</th>
                            <td class="icon">{@render fileIcon(24, 28)}</td>
                            <td class="page">{i + 1}</td>
                            <td class="code">20DEMO</td>
                            <td>{title}</td>
                            <td class="mark">*****</td>
                        </tr>
                    {/each}
                </tbody>
            </table>
        </section>
    </div>
</div>

<style>
    :global(body) {
        background: #f6f6f6;
        font-family: "Open Sans", "Noto Sans CJK JP", sans-serif;
        font-size: 12px;
    }

    .desktop,
    .window,
    .desktop * {
        box-sizing: border-box;
    }

    .desktop {
        height: 100vh;
        padding: 4px 13px 14px 4px;
    }

    .window {
        position: relative;
        display: flex;
        flex-direction: column;
        height: 100%;
        border: 1px solid #000;
        background: #2c2d31;
        box-shadow: 2px 2px 2px #a8a8a8, 6px 6px 3px #d4d4d4;
    }

    h1, h2, p {
        margin: 0;
        font-size: inherit;
        font-weight: normal;
    }

    button, input, select {
        margin: 0;
        padding: 0;
        border: none;
        background: none;
        color: inherit;
        font: inherit;
        text-align: left;
        white-space: nowrap;
        outline: none;
    }

    button svg {
        display: block;
    }

    .kana {
        font-size: 10px;
        font-feature-settings: "palt";
    }

    header {
        flex: none;
        padding-bottom: 1px;
        background: #fff;
        color: #222;
    }

    .titlebar {
        display: flex;
        align-items: center;
        gap: 4px;
        height: 22px;
        padding-left: 2px;
    }

    .caption {
        display: flex;
        margin-left: auto;
        padding-right: 2px;
    }

    .caption button {
        width: 46px;
        display: flex;
        justify-content: center;
    }

    .menu {
        display: flex;
        align-items: center;
        height: 19px;
        padding-left: 6px;
    }

    .menu.first > :global(svg) {
        margin-right: 7px;
    }

    .menu > button {
        flex: none;
    }

    .mdi {
        display: flex;
        gap: 2px;
        margin-left: auto;
    }

    .mdi button {
        display: flex;
        align-items: center;
        justify-content: center;
        width: 18px;
        height: 17px;
        border: 1px solid #eee;
    }

    .toolbars {
        display: flex;
        flex: none;
        height: 24px;
        overflow: hidden;
    }

    .bar {
        display: flex;
        flex: none;
        align-items: center;
        padding: 0 5px 0 4px;
        background: #18191c;
    }

    .bar.layers {
        flex: 1;
        min-width: 0;
        padding-right: 0;
    }

    .handle {
        flex: none;
        width: 10px;
        padding: 5px 0 0 6px;
    }

    .handle i {
        display: block;
        width: 2px;
        height: 14px;
        background: repeating-linear-gradient(#ccc 0 2px, transparent 2px 4px);
    }

    .tool {
        display: flex;
        flex: none;
        align-items: center;
        justify-content: center;
    }

    .bar .tool {
        width: 18px;
        height: 18px;
    }

    .bar .sep {
        flex: none;
        width: 2px;
        height: 16px;
        margin: 0 2px;
        background: #3c3d41;
    }

    .combo {
        position: relative;
        display: flex;
        align-items: center;
        gap: 4px;
        height: 18px;
        background: #46505a;
        color: #e4e6e8;
    }

    .combo select {
        flex: 1;
        min-width: 0;
        height: 18px;
        appearance: none;
        font-feature-settings: "palt";
    }

    .combo .chevron {
        margin-right: 1px;
    }

    .workspace {
        width: 122px;
        margin: 0 2px 0 3px;
    }

    .workspace select {
        font-size: 11px;
        padding-left: 2px;
    }

    .layer {
        flex: 233 1 0;
        margin: 0 2px;
    }

    .layer svg:first-child {
        flex: none;
        margin-right: -3px;
    }

    .color {
        flex: 127 1 0;
        margin: 0 7px 0 2px;
    }

    .swatch {
        flex: none;
        width: 15px;
        height: 15px;
        background: #fff;
        border: 1px solid #ccc;
    }

    .linetype {
        flex: 50 1 0;
        height: 18px;
        padding: 9px 0 0 4px;
        background: #46505a;
    }

    .linetype i {
        display: block;
        height: 1px;
        background: #ddd;
    }

    .lensSlider {
        appearance: none;
        width: 60px;
        height: 19px;
        margin: 0 2px;
        padding: 0 7px;
        background: #46505a;
    }

    .lensSlider::-webkit-slider-runnable-track {
        height: 4px;
        background: #e0e0e0;
    }

    .lensSlider::-webkit-slider-thumb {
        appearance: none;
        width: 7px;
        height: 14px;
        margin-top: -5px;
        border-radius: 0 0 4px 4px;
        background: #1878d0;
    }

    main {
        display: flex;
        flex: 1;
        min-height: 0;
    }

    aside {
        flex: none;
        overflow: hidden;
    }

    .draw {
        width: 22px;
    }

    .modify {
        width: 23px;
        border-left: 1px solid #46474b;
    }

    .wires {
        width: 24px;
    }

    .sideBar {
        display: flex;
        flex-direction: column;
        padding-bottom: 4px;
        background: #18191c;
    }

    .draw .sideBar {
        padding-bottom: 6px;
    }

    .grip {
        display: flex;
        justify-content: center;
        gap: 1px;
        height: 10px;
        margin-bottom: 4px;
        padding-top: 4px;
        background: #2c2d31;
    }

    .grip i {
        width: 2px;
        height: 2px;
        background: #ccc;
    }

    .sideBar .tool {
        height: 17px;
    }

    .sideBar .sep {
        height: 1px;
        margin: 3px 4px;
        background: #55575a;
    }

    .work {
        display: flex;
        flex: 1;
        flex-direction: column;
        min-width: 0;
    }

    .tabs {
        display: flex;
        flex: none;
        height: 17px;
        color: #b0b0b0;
        font-family: Roboto, "Open Sans", sans-serif;
        font-size: 11px;
    }

    .tab {
        display: flex;
        align-items: center;
        gap: 16px;
        padding: 0 7px 0 13px;
        border-right: 1px solid #18191c;
    }

    .tab.active {
        gap: 14px;
        padding: 0 6px 0 9px;
        background: #46505a;
        color: #fff;
        font-weight: bold;
    }

    .tab span {
        color: #c8c8c8;
        font-weight: normal;
    }

    .tab.add {
        padding: 0 8px;
        color: #ddd;
        font-size: 16px;
    }

    .canvas {
        position: relative;
        flex: 1;
        min-height: 0;
        overflow: hidden;
        padding: 10px 19px 0 31px;
        border-top: 1px solid #55575a;
        border-left: 1px solid #38393d;
        background:
            linear-gradient(90deg, #18191c 91px, transparent 91px) 32px 55px / 92px 92px,
            linear-gradient(#909090 1px, #18191c 1px) 32px 55px / 92px 92px;
        color: #fff;
    }

    .cad {
        width: 100%;
        table-layout: fixed;
        border-collapse: collapse;
        font-family: "Noto Sans CJK JP", sans-serif;
        font-size: 42px;
        line-height: 50px;
    }

    .wide { width: 33.3%; }
    .note { width: 20%; }

    .cad tr {
        height: 74px;
    }

    .cad tr:nth-child(even) {
        height: 73px;
    }

    .cad th,
    .cad td {
        padding: 0 18px 8px;
        border: 1px solid #d0d0d0;
        font-weight: 500;
        text-align: left;
    }

    .cad th {
        text-align: center;
    }

    .cad .kana {
        font-size: 38px;
    }

    .cad .half {
        font-size: 51px;
        font-weight: normal;
        font-feature-settings: "hwid";
    }

    .cad .stars {
        padding: 10px 18px 0;
        font-family: "DejaVu Sans Mono", monospace;
        font-size: 35px;
        font-weight: bold;
    }

    .cursor {
        position: absolute;
        left: 711px;
        top: 0;
    }

    .compass {
        position: absolute;
        right: 9px;
        top: 8px;
    }

    .ucs {
        position: absolute;
        left: 86px;
        top: 546px;
    }

    .layouts {
        display: flex;
        flex: none;
        align-items: center;
        height: 17px;
        padding-left: 1px;
        border-bottom: 1px solid #55575a;
        color: #b4b4b4;
        font-size: 10px;
        font-feature-settings: "palt";
    }

    .nav {
        display: flex;
        align-items: center;
        justify-content: center;
        width: 16px;
        height: 15px;
        border-left: 1px solid #888;
        background: #18191c;
    }

    .layout {
        height: 16px;
        padding: 0 5px 0 3px;
        font-size: 9px;
    }

    .layout span {
        font-size: 11px;
    }

    .layout.active {
        margin-left: 2px;
        background: #46505a;
        color: #fff;
        font-weight: bold;
        font-size: 10px;
        padding: 0 2px;
    }

    .command {
        display: flex;
        flex: none;
        padding-top: 2px;
    }

    .commandHandle {
        width: 9px;
        color: #ccc;
    }

    .commandHandle button {
        display: block;
        font-size: 9px;
        line-height: 14px;
    }

    .commandHandle i {
        display: block;
        width: 2px;
        height: 12px;
        margin: 13px 0 0 3px;
        background: repeating-linear-gradient(#ccc 0 2px, transparent 2px 4px);
    }

    .console {
        flex: 1;
        min-width: 0;
    }

    .history {
        display: flex;
        justify-content: space-between;
        height: 54px;
        padding: 2px 2px 3px 4px;
        background: #828282;
        color: #fff;
        font-size: 11px;
        line-height: 15px;
        font-feature-settings: "palt";
    }

    .scroll {
        display: flex;
        flex-direction: column;
        justify-content: space-between;
        width: 16px;
        padding: 6px 4px;
        background: #f0f0f0;
    }

    .prompt {
        display: flex;
        align-items: center;
        gap: 8px;
        height: 19px;
        padding: 0 4px 3px;
        background: #303437;
        color: #ddd;
    }

    .prompt input {
        flex: 1;
        font-size: 11px;
        font-style: italic;
        font-feature-settings: "palt";
    }

    .prompt input::placeholder {
        color: #ccc;
    }

    footer {
        display: flex;
        flex: none;
        align-items: center;
        height: 17px;
        padding: 3px 2px 0;
        background: #18191c;
        color: #e4e4e4;
    }

    .ready {
        flex: 1;
        line-height: 14px;
    }

    .coords {
        width: 145px;
        white-space: nowrap;
        font-size: 11px;
        line-height: 14px;
    }

    .field {
        flex: none;
        height: 13px;
        padding: 0 1px;
        border-left: 1px solid #aaa;
        font-size: 11px;
        line-height: 13px;
    }

    .field b {
        display: block;
        font-weight: normal;
    }

    .field.small,
    .field.small .kana {
        font-size: 10px;
    }

    .field.on b {
        margin: 0 1px;
        background: #46505a;
    }

    .field.off {
        color: #505256;
    }

    .field.more {
        width: 31px;
        padding-left: 4px;
    }

    .size {
        margin-left: 4px;
    }

    .dialog {
        position: absolute;
        left: 800px;
        top: 375px;
        width: 539px;
        padding-bottom: 1px;
        border: 3px solid #0870c4;
        background: #fff;
        color: #333;
        font-family: "Noto Sans CJK JP", sans-serif;
        font-size: 21px;
        line-height: 28px;
    }

    .dialog .kana {
        font-size: 18px;
    }

    .dialogTitle {
        display: flex;
        align-items: center;
        gap: 10px;
        height: 48px;
        padding-left: 9px;
    }

    .dialogMenu {
        display: flex;
        align-items: center;
        gap: 28px;
        height: 43px;
        padding-left: 9px;
        color: #444;
    }

    .dialogMenu .kana {
        font-size: 17px;
    }

    .dialogTools {
        display: flex;
        align-items: center;
        gap: 10px;
        height: 49px;
        border-top: 2px solid #bbb;
        border-bottom: 2px solid #888;
        background: #f0f0f0;
    }

    .dialogTools i {
        width: 1px;
        height: 34px;
        background: #999;
    }

    .index {
        width: 100%;
        table-layout: fixed;
        border-collapse: collapse;
        color: #111;
    }

    .i1 { width: 57px; }
    .i2 { width: 46px; }
    .i3 { width: 64px; }
    .i4 { width: 89px; }
    .i5 { width: 119px; }

    .index tr {
        height: 40px;
    }

    .index th,
    .index td {
        padding: 0 3px 2px;
        border: 1px solid #bfbfbf;
        font-weight: normal;
        text-align: left;
        white-space: nowrap;
    }

    .index th {
        background: #f0f0f0;
        text-align: center;
    }

    .index tbody th {
        font-feature-settings: "hwid";
    }

    .index tr > :first-child {
        border-left: none;
    }

    .index tr > :last-child {
        border-right: none;
    }

    .index .icon {
        padding: 0;
    }

    .index .icon :global(svg) {
        display: block;
        margin: 0 auto;
    }

    .index .selected {
        outline: 3px solid #222;
        outline-offset: -2px;
    }

    .index .page {
        background: #f0f0f0;
        padding-left: 5px;
        font-feature-settings: "hwid";
    }

    .index .code {
        font-size: 20px;
    }

    .index .mark {
        padding-top: 2px;
        font-family: "DejaVu Sans Mono", monospace;
        font-size: 18px;
        font-weight: bold;
    }
</style>
